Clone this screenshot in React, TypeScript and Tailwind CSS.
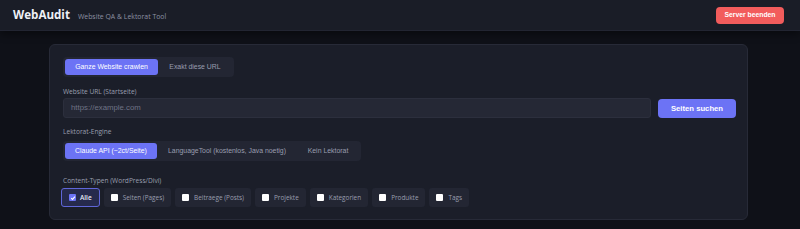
import React from "react";

const SANS = "font-['Liberation_Sans',Arial,sans-serif]";
const UI = "font-['Open_Sans','Noto_Sans',sans-serif]";

function Box({ checked }: { checked?: boolean }) {
  if (checked) {
    return (
      <span className="w-[7px] h-[7px] rounded-[1px] bg-[#6c73f5] flex items-center justify-center">
        <svg width="6" height="6" viewBox="0 0 10 10">
          <path d="M2 5.2 L4.2 7.4 L8.2 2.6" fill="none" stroke="white" strokeWidth="1.8" />
        </svg>
      </span>
    );
  }
  return <span className="w-[7px] h-[7px] rounded-[1px] bg-white" />;
}

function Label({ children, className }: { children: React.ReactNode; className: string }) {
  return (
    <div className={`text-[6.6px] text-[#9a9eaf] leading-[9px] font-['Open_Sans','Noto_Sans',sans-serif] ${className}`}>
      {children}
    </div>
  );
}

export default function App() {
  const chips = [
    { label: "Alle", checked: true },
    { label: "Seiten (Pages)" },
    { label: "Beitraege (Posts)" },
    { label: "Projekte" },
    { label: "Kategorien" },
    { label: "Produkte" },
    { label: "Tags" },
  ];
  return (
    <div className="w-[800px] h-[229px] bg-[#0f1118] overflow-hidden">
      <header className="h-[31px] bg-[#1a1d27] border-b border-[#222532] flex items-center justify-between pl-[13px] pr-[16px] shadow-[0_3px_8px_rgba(0,0,0,0.45)] relative">
        <div className="flex items-baseline gap-[8px]">
          <span className={`text-[11.6px] font-bold text-[#eef0f6] ${UI}`}>WebAudit</span>
          <span className={`text-[6.9px] text-[#8d91a3] ${UI}`}>Website QA &amp; Lektorat Tool</span>
        </div>
        <button className={`h-[17px] w-[68px] rounded-[4px] bg-[#f25c5c] text-white text-[6.8px] font-bold flex items-center justify-center ${SANS}`}>
          Server beenden
        </button>
      </header>
      <div className="pt-[13px] pl-[49px]">
        <div className="w-[699px] h-[176px] rounded-[6px] bg-[#1b1e29] border border-[#272a37] pt-[12px] pl-[13px] pr-[12px] flex flex-col items-start">
          <div className="flex bg-[#232633] rounded-[4px] p-[2px] h-[20px]">
            <span className={`w-[93px] rounded-[3px] bg-[#6c73f5] text-white text-[6.9px] flex items-center justify-center ${SANS}`}>Ganze Website crawlen</span>
            <span className={`w-[74px] text-[#9a9eaf] text-[6.9px] flex items-center justify-center ${SANS}`}>Exakt diese URL</span>
          </div>
          <Label className="mt-[10px]">Website URL (Startseite)</Label>
          <div className="mt-[2px] flex gap-[7px]">
            <div className={`w-[588px] h-[20px] rounded-[3px] bg-[#252835] border border-[#2c2f3d] flex items-center pl-[7px] text-[7.8px] text-[#6f7385] ${SANS}`}>
              https://example.com
            </div>
            <button className={`w-[78px] h-[19px] mt-[1px] rounded-[4px] bg-[#6c73f5] text-white text-[7.7px] font-bold flex items-center justify-center ${SANS}`}>
              Seiten suchen
            </button>
          </div>
          <Label className="mt-[9px]">Lektorat-Engine</Label>
          <div className="mt-[5px] flex bg-[#232633] rounded-[4px] p-[2px] h-[20px]">
            <span className={`w-[92px] rounded-[3px] bg-[#6c73f5] text-white text-[6.9px] flex items-center justify-center ${SANS}`}>Claude API (~2ct/Seite)</span>
            <span className={`w-[140px] text-[#9a9eaf] text-[6.9px] flex items-center justify-center ${SANS}`}>LanguageTool (kostenlos, Java noetig)</span>
            <span className={`w-[62px] text-[#9a9eaf] text-[6.9px] flex items-center justify-center ${SANS}`}>Kein Lektorat</span>
          </div>
          <Label className="mt-[15px]">Content-Typen (WordPress/Divi)</Label>
          <div className="mt-[3px] -ml-[2px] flex gap-[4px]">
            {chips.map((c) =>
              c.checked ? (
                <span key={c.label} className={`h-[19px] px-[7px] rounded-[3px] bg-[#262a4c] border border-[#5f66d8] flex items-center gap-[4px] text-[6.5px] text-[#e6e8f5] font-semibold ${UI}`}>
                  <Box checked />
                  {c.label}
                </span>
              ) : (
                <span key={c.label} className={`h-[19px] px-[7px] rounded-[3px] bg-[#232633] flex items-center gap-[5px] text-[6.4px] text-[#9a9eaf] ${UI}`}>
                  <Box />
                  {c.label}
                </span>
              )
            )}
          </div>
        </div>
      </div>
    </div>
  );
}
